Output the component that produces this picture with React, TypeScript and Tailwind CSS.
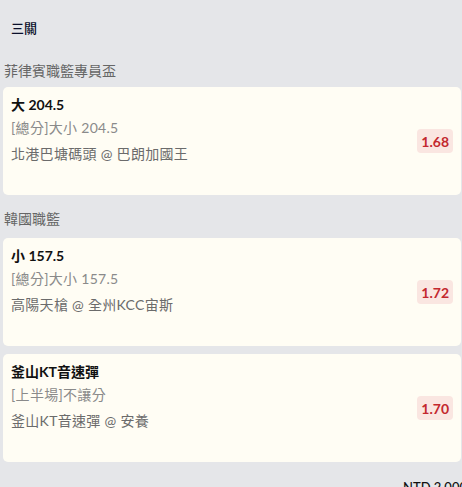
const FONT = "font-['Lato','Noto_Sans_CJK_TC',sans-serif]";

type Bet = {
  title: string;
  market: string;
  match: string;
  odds: string;
};

type Group = {
  league: string;
  top: string;
  bets: Bet[];
};

const GROUPS: Group[] = [
  {
    league: "菲律賓職籃專員盃",
    top: "mt-[23px] mb-[6px]",
    bets: [
      {
        title: "大 204.5",
        market: "[總分]大小 204.5",
        match: "北港巴塘碼頭 @ 巴朗加國王",
        odds: "1.68",
      },
    ],
  },
  {
    league: "韓國職籃",
    top: "mt-[14px] mb-[9px]",
    bets: [
      {
        title: "小 157.5",
        market: "[總分]大小 157.5",
        match: "高陽天槍 @ 全州KCC宙斯",
        odds: "1.72",
      },
      {
        title: "釜山KT音速彈",
        market: "[上半場]不讓分",
        match: "釜山KT音速彈 @ 安養",
        odds: "1.70",
      },
    ],
  },
];

function BetCard({ bet }: { bet: Bet }) {
  return (
    <div className="ml-[3px] mr-[1px] h-[108px] rounded-[5px] bg-[#fffdf4] pl-2 pr-2 flex items-center">
      <div className="flex-1 self-start pt-2">
        <div className="text-[14px] leading-5 font-bold text-[#111]">{bet.title}</div>
        <div className="text-[14px] leading-[26px] tracking-[0.3px] text-[#8a8a8a]">{bet.market}</div>
        <div className="text-[14px] leading-[26px] tracking-[0.3px] text-[#6b6b6b]">{bet.match}</div>
      </div>
      <div className="rounded-[4px] bg-[#fae6e1] px-[4px] h-[24px] flex items-center text-[14px] font-bold text-[#c3282e]">
        {bet.odds}
      </div>
    </div>
  );
}

export default function App() {
  return (
    <main className={`${FONT} w-[462px] h-[487px] overflow-hidden bg-[#e5e6e9]`}>
      <div className="pt-[18px] pl-[11px] text-[13px] leading-5 font-medium text-[#0a0f2a]">三關</div>

      {GROUPS.map((g) => (
        <div key={g.league}>
          <div className={`pl-[4px] text-[14px] leading-5 text-[#666] ${g.top}`}>{g.league}</div>
          <div className="flex flex-col gap-2">
            {g.bets.map((b) => (
              <BetCard key={b.title} bet={b} />
            ))}
          </div>
        </div>
      ))}

      <div className="mt-[17px] ml-[403px] whitespace-nowrap text-[13px] leading-4 font-medium text-[#111]">
        NTD 2,000
      </div>
    </main>
  );
}
